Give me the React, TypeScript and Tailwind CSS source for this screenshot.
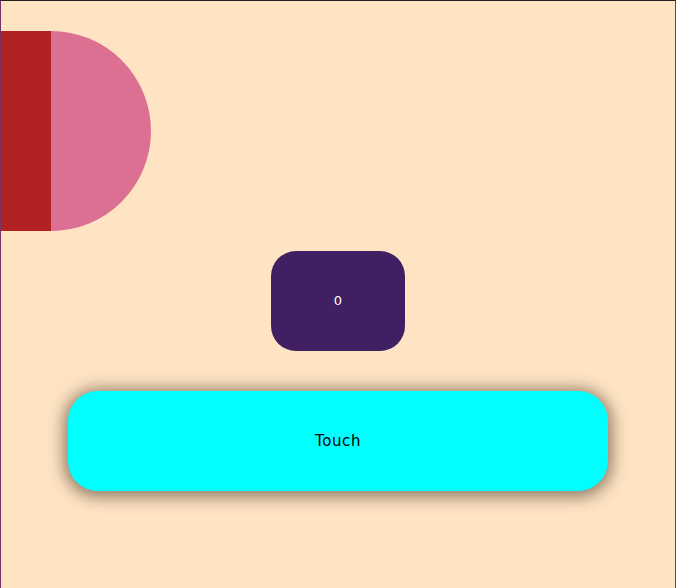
import React from "react";

export default function App() {
  return (
    <div
      className="min-h-[600px] w-full bg-[#ffe4c4] border-t border-t-[#222222] border-x border-x-[#74336a]"
      style={{ fontFamily: '"DejaVu Sans", "Noto Sans", sans-serif' }}
    >
      <div className="flex pt-[30px]">
        <div className="w-[50px] h-[200px] bg-[#b22222]" />
        <div className="w-[100px] h-[200px] bg-[#db7093] rounded-r-[100px]" />
      </div>
      <div className="flex justify-center mt-[20px]">
        <div className="w-[20%] h-[100px] bg-[#402062] rounded-[25px] flex items-center justify-center text-white text-[13px]">
          0
        </div>
      </div>
      <div className="flex justify-center mt-[40px]">
        <div className="w-[80%] h-[100px] bg-[#00ffff] rounded-[30px] flex items-center justify-center text-black text-[15px] tracking-[0.6px] shadow-[0_2px_16px_4px_rgba(30,20,10,0.5)]">
          Touch
        </div>
      </div>
    </div>
  );
}
